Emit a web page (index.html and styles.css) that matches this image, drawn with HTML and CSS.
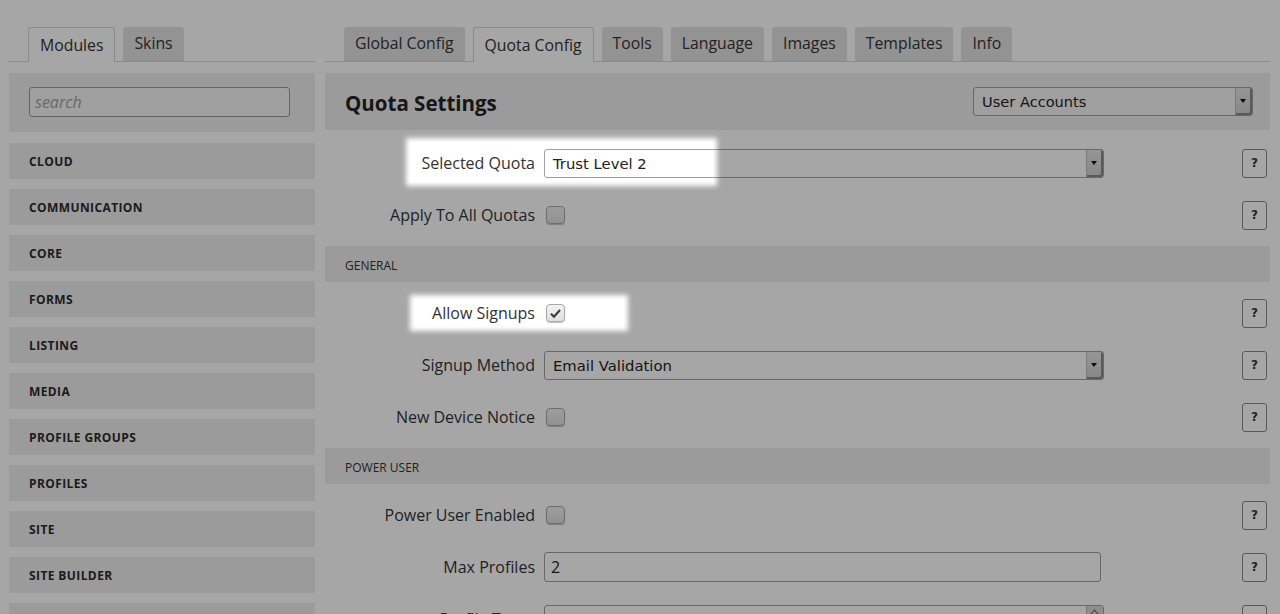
FILE: index.html
```html
<!DOCTYPE html>
<html>
<head>
<meta charset="utf-8">
<title>Quota Config</title>
<link rel="stylesheet" href="styles.css">
</head>
<body>
<div class="app">
  <aside class="left">
    <nav class="tabs">
      <div class="tab active">Modules</div>
      <div class="tab">Skins</div>
    </nav>
    <div class="search-panel">
      <div class="search-input">search</div>
    </div>
    <ul class="modules">
      <li>CLOUD</li>
      <li>COMMUNICATION</li>
      <li>CORE</li>
      <li>FORMS</li>
      <li>LISTING</li>
      <li>MEDIA</li>
      <li>PROFILE GROUPS</li>
      <li>PROFILES</li>
      <li>SITE</li>
      <li>SITE BUILDER</li>
      <li>SYSTEM</li>
    </ul>
  </aside>
  <main class="right">
    <nav class="tabs">
      <div class="tab">Global Config</div>
      <div class="tab active">Quota Config</div>
      <div class="tab">Tools</div>
      <div class="tab">Language</div>
      <div class="tab">Images</div>
      <div class="tab">Templates</div>
      <div class="tab">Info</div>
    </nav>
    <div class="panel-head">
      <h1>Quota Settings</h1>
      <div class="select head-select"><span>User Accounts</span><i class="arrow"></i></div>
    </div>
    <div class="row">
      <label>Selected Quota</label>
      <div class="select wide"><span>Trust Level 2</span><i class="arrow"></i></div>
      <div class="help">?</div>
    </div>
    <div class="row">
      <label>Apply To All Quotas</label>
      <span class="check"></span>
      <div class="help">?</div>
    </div>
    <div class="section">GENERAL</div>
    <div class="row">
      <label>Allow Signups</label>
      <span class="check checked"><svg viewBox="0 0 12 12" width="13" height="13"><path d="M1.8 6.2 L4.6 9 L10.2 2.8" fill="none" stroke="#3a3a3a" stroke-width="1.9"/></svg></span>
      <div class="help">?</div>
    </div>
    <div class="row">
      <label>Signup Method</label>
      <div class="select wide"><span>Email Validation</span><i class="arrow"></i></div>
      <div class="help">?</div>
    </div>
    <div class="row">
      <label>New Device Notice</label>
      <span class="check"></span>
      <div class="help">?</div>
    </div>
    <div class="section">POWER USER</div>
    <div class="row">
      <label>Power User Enabled</label>
      <span class="check"></span>
      <div class="help">?</div>
    </div>
    <div class="row">
      <label>Max Profiles</label>
      <div class="text-input">2</div>
      <div class="help">?</div>
    </div>
    <div class="row">
      <label>Profile Types</label>
      <div class="select wide multi"><span>Personal</span><i class="up"></i></div>
      <div class="help">?</div>
    </div>
  </main>
</div>
<div class="dim">
  <div class="spot spot-quota"></div>
  <div class="spot spot-signups"></div>
</div>
</body>
</html>
```

FILE: styles.css
```css
html, body {
  margin: 0;
  padding: 0;
  overflow: hidden;
  height: 614px;
  background: #ffffff;
}
body {
  font-family: "Open Sans", "DejaVu Sans", sans-serif;
  color: #333;
}
.app {
  display: flex;
  gap: 10px;
  padding: 27px 10px 0 9px;
}
.left {
  width: 306px;
  flex: none;
}
.right {
  flex: 1;
  min-width: 0;
}
.tabs {
  display: flex;
  align-items: flex-end;
  gap: 8px;
  padding-left: 19px;
  height: 34px;
  border-bottom: 1px solid #d6d6d6;
}
.tab {
  height: 34px;
  line-height: 32px;
  padding: 0 11px;
  font-size: 15.8px;
  color: #333;
  background: #e2e2e2;
  border-radius: 3px 3px 0 0;
  box-sizing: border-box;
}
.tab.active {
  background: #fff;
  border: 1px solid #d6d6d6;
  border-bottom: none;
  height: 35px;
  margin-bottom: -1px;
  line-height: 34px;
}
.search-panel {
  margin-top: 11px;
  height: 59px;
  background: #efefef;
  padding: 14px 25px 0 20px;
  box-sizing: border-box;
}
.search-input {
  height: 30px;
  box-sizing: border-box;
  border: 1px solid #9a9a9a;
  border-radius: 3px;
  background: #f6f6f6;
  font-size: 16px;
  font-style: italic;
  color: #a0a0a0;
  padding-left: 5px;
  line-height: 28px;
}
.modules {
  list-style: none;
  margin: 11px 0 0;
  padding: 0;
  display: flex;
  flex-direction: column;
  gap: 10px;
}
.modules li {
  height: 36px;
  line-height: 38px;
  background: #efefef;
  padding-left: 20px;
  font-size: 12px;
  font-weight: 700;
  letter-spacing: 0.4px;
  color: #2a2a2a;
  box-sizing: border-box;
}
.panel-head {
  margin-top: 11px;
  height: 57px;
  background: #efefef;
  display: flex;
  align-items: center;
  justify-content: space-between;
  padding: 0 17px 0 20px;
}
.panel-head h1 {
  margin: 0;
  font-size: 20.5px;
  font-weight: 700;
  color: #222;
  padding-top: 2px;
}
.select {
  position: relative;
  height: 29px;
  box-sizing: border-box;
  border: 1px solid #a0a0a0;
  border-radius: 3px;
  background: #fff;
  font-family: "DejaVu Sans", sans-serif;
  font-size: 14.8px;
  color: #222;
  line-height: 27px;
  padding-left: 8px;
}
.head-select {
  width: 280px;
  background: #f4f4f4;
  font-size: 14.6px;
}
.select.wide {
  width: 560px;
}
.arrow {
  position: absolute;
  right: 0;
  top: 0;
  bottom: 0;
  width: 16px;
  background: linear-gradient(#e6e6e6, #cfcfcf);
  border-left: 1px solid #bdbdbd;
  box-shadow: inset -2px -2px 0 #8a8a8a;
  border-radius: 0 2px 2px 0;
}
.arrow::after {
  content: "";
  position: absolute;
  left: 4px;
  top: 11px;
  border-left: 3px solid transparent;
  border-right: 3px solid transparent;
  border-top: 4px solid #111;
}
.up {
  position: absolute;
  right: 0;
  top: 0;
  width: 16px;
  height: 16px;
  background: #d8d8d8;
  border-left: 1px solid #bdbdbd;
}
.up::after {
  content: "";
  position: absolute;
  left: 4px;
  top: 5px;
  width: 6px;
  height: 6px;
  border-left: 1px solid #666;
  border-top: 1px solid #666;
  transform: rotate(45deg);
}
.row {
  height: 52px;
  display: flex;
  align-items: center;
}
.panel-head + .row {
  margin-top: 7px;
}
.row label {
  width: 210px;
  flex: none;
  text-align: right;
  margin-right: 9px;
  font-size: 16px;
  color: #333;
}
.check {
  width: 19px;
  height: 18px;
  box-sizing: border-box;
  margin-left: 2px;
  border: 1px solid #a8a8a8;
  border-radius: 4px;
  background: linear-gradient(#f2f2f2, #e0e0e0);
  box-shadow: 0 1px 1px rgba(0, 0, 0, 0.25);
  display: flex;
  align-items: center;
  justify-content: center;
}
.text-input {
  width: 557px;
  height: 30px;
  box-sizing: border-box;
  border: 1px solid #a0a0a0;
  border-radius: 3px;
  background: #fff;
  font-size: 16px;
  color: #222;
  line-height: 28px;
  padding-left: 6px;
}
.help {
  margin-left: auto;
  margin-right: 3px;
  width: 25px;
  height: 29px;
  box-sizing: border-box;
  border: 1px solid #888;
  border-radius: 3px;
  font-family: "DejaVu Sans", sans-serif;
  font-weight: 700;
  font-size: 12px;
  color: #333;
  display: flex;
  align-items: center;
  justify-content: center;
}
.section {
  margin: 5px 0;
  height: 36px;
  line-height: 40px;
  background: #efefef;
  padding-left: 20px;
  font-size: 12px;
  color: #333;
  box-sizing: border-box;
}
.dim {
  position: fixed;
  inset: 0;
  background: #a6a6a6;
  mix-blend-mode: multiply;
  pointer-events: none;
}
.spot {
  position: absolute;
  background: #fff;
  box-shadow: 0 0 5px 4px #fff;
}
.spot-quota {
  left: 410px;
  top: 142px;
  width: 303px;
  height: 40px;
}
.spot-signups {
  left: 414px;
  top: 299px;
  width: 210px;
  height: 28px;
}
```
